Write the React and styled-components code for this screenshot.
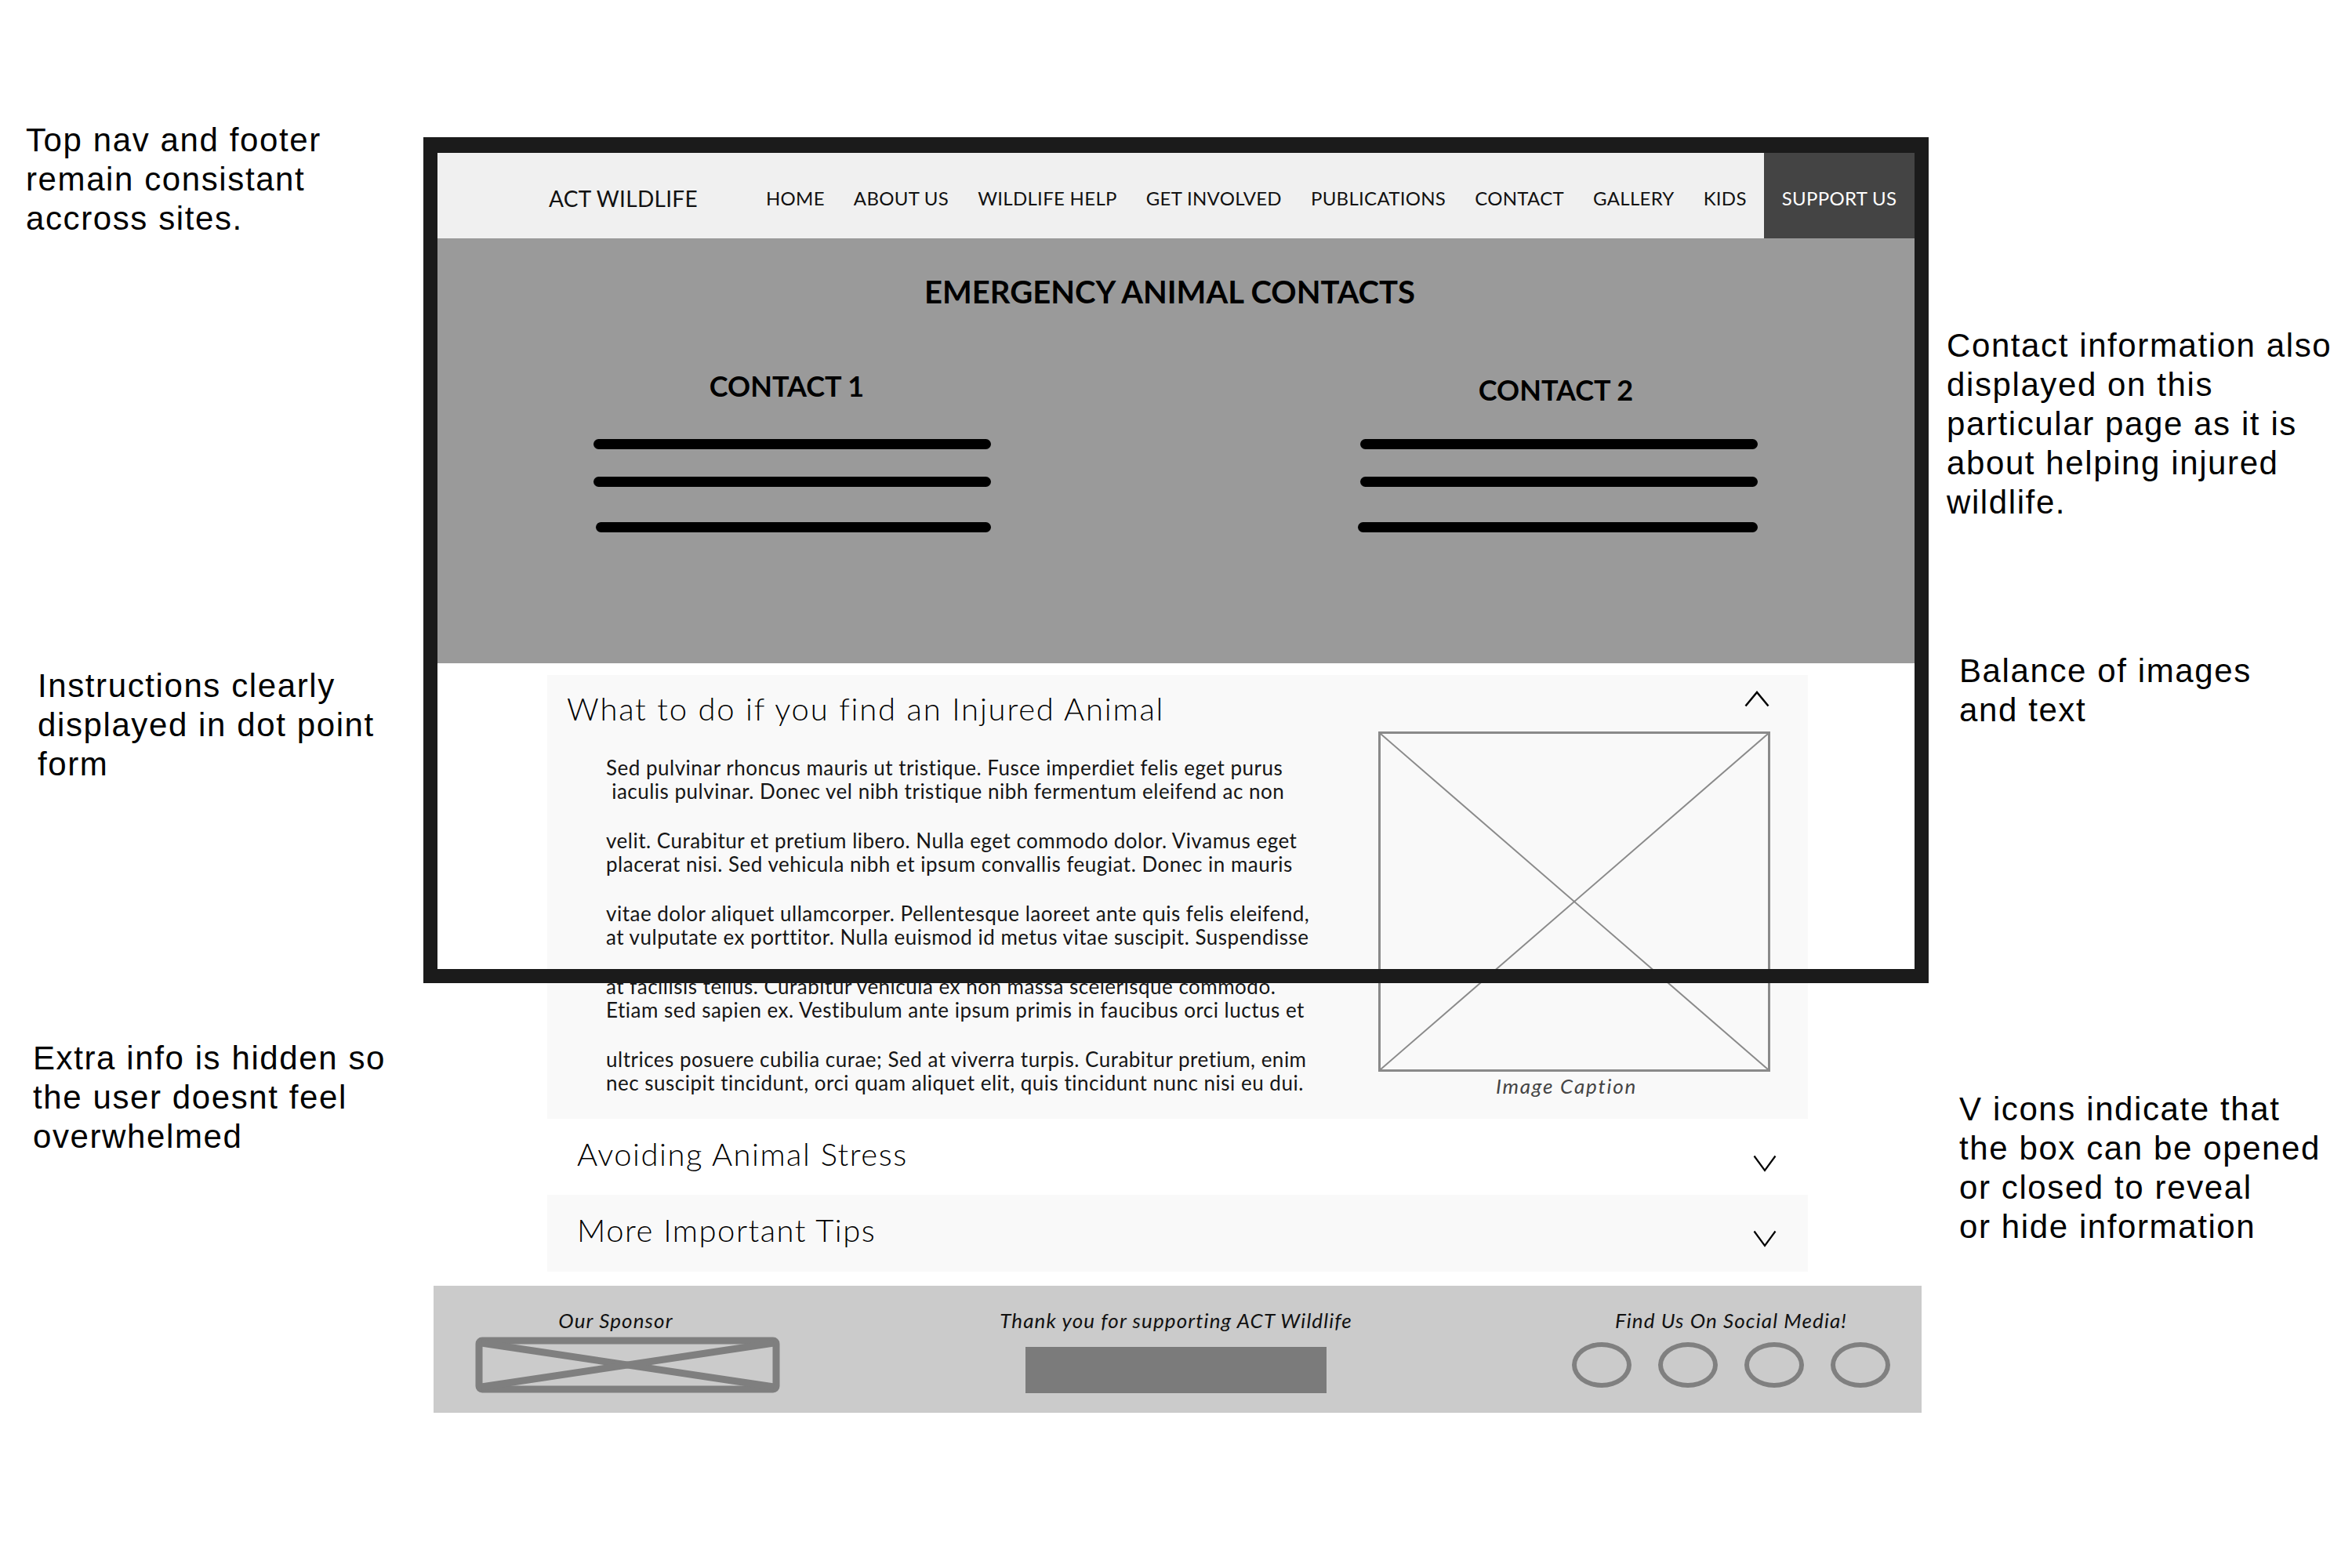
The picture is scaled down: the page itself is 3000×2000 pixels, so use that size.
import React from 'react';
import styled, { createGlobalStyle } from 'styled-components';

const Global = createGlobalStyle`
  html, body { margin: 0; padding: 0; background: #fff; }
  body { width: 3000px; height: 2000px; overflow: hidden; }
  #root { width: 3000px; height: 2000px; }
`;

const Board = styled.div`
  display: grid;
  grid-template-columns: 540px 1920px 540px;
  width: 3000px;
  height: 2000px;
  background: #fff;
`;

const NoteColumn = styled.aside`
  display: flex;
  flex-direction: column;
  align-items: flex-start;
  padding-top: ${(p) => p.$top}px;
`;

const Note = styled.p`
  margin: ${(p) => p.$gap || 0}px 0 0 ${(p) => p.$indent}px;
  font-family: "Liberation Sans", Arial, sans-serif;
  font-size: 42px;
  line-height: 50px;
  letter-spacing: 1.6px;
  color: #000;
  white-space: pre;
`;

const Stage = styled.main`
  position: relative;
  padding-top: 195px;
  font-family: Lato, "Open Sans", sans-serif;
  color: #000;
`;

const Frame = styled.div`
  position: absolute;
  left: 0;
  top: 175px;
  width: 1920px;
  height: 1079px;
  box-sizing: border-box;
  border: solid #1b1b1b;
  border-width: 20px 18px 18px 18px;
  pointer-events: none;
  z-index: 2;
`;

const Nav = styled.nav`
  display: flex;
  align-items: stretch;
  height: 109px;
  margin: 0 18px;
  background: #f0f0f0;
`;

const Brand = styled.div`
  display: flex;
  align-items: center;
  padding: 6px 0 0 142px;
  margin-right: 87px;
  font-size: 28px;
  letter-spacing: 0.3px;
  color: #111;
`;

const Links = styled.ul`
  display: flex;
  align-items: center;
  gap: 37px;
  margin: 0;
  padding: 6px 0 0;
  list-style: none;
  font-size: 24px;
  letter-spacing: 0.3px;
  color: #111;
`;

const Support = styled.a`
  margin-left: auto;
  width: 192px;
  background: #444;
  color: #fff;
  display: flex;
  align-items: center;
  justify-content: center;
  padding-top: 6px;
  font-size: 24px;
  letter-spacing: 0.3px;
  text-decoration: none;
`;

const Hero = styled.section`
  height: 542px;
  margin: 0 18px;
  box-sizing: border-box;
  padding-top: 44px;
  background: #9a9a9a;
`;

const HeroTitle = styled.h1`
  margin: 0;
  padding-right: 16px;
  text-align: center;
  font-size: 40px;
  line-height: 48px;
  font-weight: 700;
`;

const ContactRow = styled.div`
  display: flex;
  justify-content: space-between;
  padding: 0 200px 0 199px;
`;

const ContactCol = styled.div`
  display: flex;
  flex-direction: column;
  width: 507px;
`;

const ContactHeading = styled.h2`
  margin: ${(p) => p.$top}px 0 0;
  padding-right: ${(p) => p.$shift}px;
  text-align: center;
  font-size: 36px;
  line-height: 44px;
  font-weight: 700;
`;

const Rule = styled.div`
  height: 13px;
  border-radius: 7px;
  background: #000;
  margin-top: ${(p) => p.$top}px;
  margin-left: ${(p) => p.$shift || 0}px;
`;

const Accordion = styled.div`
  display: flex;
  flex-direction: column;
  width: 1608px;
  margin: 15px 0 0 158px;
`;

const Panel = styled.div`
  background: #f9f9f9;
`;

const PanelHead = styled.div`
  display: flex;
  justify-content: space-between;
  align-items: flex-start;
  padding: 20px 49px 0 25px;
`;

const PanelTitle = styled.h2`
  margin: 0;
  font-size: 40px;
  line-height: 46px;
  letter-spacing: 1.8px;
  font-weight: 300;
`;

const ChevronBox = styled.svg`
  display: block;
  flex: none;
  margin-top: ${(p) => p.$top || 0}px;
`;

const PanelBody = styled.div`
  display: flex;
  align-items: flex-start;
  margin-top: 6px;
  padding: 0 48px 27px 75px;
`;

const Copy = styled.div`
  padding-top: 31px;
  font-size: 26px;
  line-height: 30px;
  letter-spacing: 0.5px;
  color: #151515;
`;

const Para = styled.p`
  margin: 0 0 33px;
  white-space: pre;
  &:last-child { margin-bottom: 0; }
`;

const Figure = styled.figure`
  margin: 0 0 0 auto;
  width: 500px;
`;

const Caption = styled.figcaption`
  margin-top: 3px;
  padding-right: 20px;
  text-align: center;
  font-style: italic;
  font-size: 26px;
  line-height: 30px;
  letter-spacing: 1.8px;
  color: #444;
`;

const Item = styled.div`
  display: flex;
  align-items: center;
  justify-content: space-between;
  height: ${(p) => p.$h}px;
  box-sizing: border-box;
  padding: 0 40px 0 38px;
  background: ${(p) => (p.$shaded ? '#f9f9f9' : 'transparent')};
`;

const ItemTitle = styled.h3`
  margin: 0 0 8px;
  font-size: 40px;
  line-height: 48px;
  letter-spacing: 1.5px;
  font-weight: 300;
`;

const Footer = styled.footer`
  display: flex;
  justify-content: space-between;
  width: 1898px;
  height: 162px;
  margin: 18px 0 0 13px;
  box-sizing: border-box;
  padding: 29px 40px 0 53px;
  background: #cbcbcb;
`;

const FooterCol = styled.div`
  display: flex;
  flex-direction: column;
  align-items: center;
  width: ${(p) => p.$w}px;
`;

const FooterLabel = styled.span`
  padding-right: ${(p) => p.$shift || 0}px;
  white-space: nowrap;
  font-style: italic;
  font-size: 26px;
  line-height: 30px;
  letter-spacing: 1.1px;
  color: #111;
`;

const SponsorArt = styled.svg`
  display: block;
  margin-top: 6px;
`;

const Donate = styled.div`
  width: 384px;
  height: 59px;
  margin-top: 19px;
  background: #7b7b7b;
`;

const Socials = styled.div`
  display: flex;
  gap: 34px;
  margin-top: 13px;
`;

const Social = styled.span`
  width: 76px;
  height: 58px;
  box-sizing: border-box;
  border: 6px solid #808080;
  border-radius: 50%;
`;

const ChevronUp = () => (
  <ChevronBox width="32" height="21" viewBox="0 0 32 21">
    <polyline points="1.5,19.5 16,2 30.5,19.5" fill="none" stroke="#000" strokeWidth="2.5" />
  </ChevronBox>
);

const ChevronDown = ({ top }) => (
  <ChevronBox $top={top} width="30" height="22" viewBox="0 0 30 22">
    <polyline points="1.5,1.5 15,20 28.5,1.5" fill="none" stroke="#000" strokeWidth="2.2" />
  </ChevronBox>
);

const paragraphs = [
  ['Sed pulvinar rhoncus mauris ut tristique. Fusce imperdiet felis eget purus', ' iaculis pulvinar. Donec vel nibh tristique nibh fermentum eleifend ac non'],
  ['velit. Curabitur et pretium libero. Nulla eget commodo dolor. Vivamus eget', 'placerat nisi. Sed vehicula nibh et ipsum convallis feugiat. Donec in mauris'],
  ['vitae dolor aliquet ullamcorper. Pellentesque laoreet ante quis felis eleifend,', 'at vulputate ex porttitor. Nulla euismod id metus vitae suscipit. Suspendisse'],
  ['at facilisis tellus. Curabitur vehicula ex non massa scelerisque commodo.', 'Etiam sed sapien ex. Vestibulum ante ipsum primis in faucibus orci luctus et'],
  ['ultrices posuere cubilia curae; Sed at viverra turpis. Curabitur pretium, enim', 'nec suscipit tincidunt, orci quam aliquet elit, quis tincidunt nunc nisi eu dui.'],
];

const links = ['HOME', 'ABOUT US', 'WILDLIFE HELP', 'GET INVOLVED', 'PUBLICATIONS', 'CONTACT', 'GALLERY', 'KIDS'];

export default function App() {
  return (
    <>
      <Global />
      <Board>
        <NoteColumn $top={154}>
          <Note $indent={33}>{'Top nav and footer\nremain consistant\naccross sites.'}</Note>
          <Note $indent={48} $gap={546}>{'Instructions clearly\ndisplayed in dot point\nform'}</Note>
          <Note $indent={42} $gap={325}>{'Extra info is hidden so\nthe user doesnt feel\noverwhelmed'}</Note>
        </NoteColumn>

        <Stage>
          <Frame />
          <Nav>
            <Brand>ACT WILDLIFE</Brand>
            <Links>
              {links.map((l) => (
                <li key={l}>{l}</li>
              ))}
            </Links>
            <Support>SUPPORT US</Support>
          </Nav>

          <Hero>
            <HeroTitle>EMERGENCY ANIMAL CONTACTS</HeroTitle>
            <ContactRow>
              <ContactCol>
                <ContactHeading $top={74} $shift={14}>CONTACT 1</ContactHeading>
                <Rule $top={46} />
                <Rule $top={35} />
                <Rule $top={45} $shift={3} />
              </ContactCol>
              <ContactCol>
                <ContactHeading $top={79} $shift={8}>CONTACT 2</ContactHeading>
                <Rule $top={41} />
                <Rule $top={35} />
                <Rule $top={45} $shift={-3} />
              </ContactCol>
            </ContactRow>
          </Hero>

          <Accordion>
            <Panel>
              <PanelHead>
                <PanelTitle>What to do if you find an Injured Animal</PanelTitle>
                <ChevronUp />
              </PanelHead>
              <PanelBody>
                <Copy>
                  {paragraphs.map((p, i) => (
                    <Para key={i}>{p[0] + '\n' + p[1]}</Para>
                  ))}
                </Copy>
                <Figure>
                  <svg width="500" height="434" viewBox="0 0 500 434" style={{ display: 'block' }}>
                    <rect x="1.5" y="1.5" width="497" height="431" fill="none" stroke="#8a8a8a" strokeWidth="3" />
                    <line x1="3" y1="3" x2="497" y2="431" stroke="#8a8a8a" strokeWidth="2" />
                    <line x1="497" y1="3" x2="3" y2="431" stroke="#8a8a8a" strokeWidth="2" />
                  </svg>
                  <Caption>Image Caption</Caption>
                </Figure>
              </PanelBody>
            </Panel>
            <Item $h={97}>
              <ItemTitle>Avoiding Animal Stress</ItemTitle>
              <ChevronDown top={16} />
            </Item>
            <Item $h={98} $shaded>
              <ItemTitle>More Important Tips</ItemTitle>
              <ChevronDown top={14} />
            </Item>
          </Accordion>

          <Footer>
            <FooterCol $w={389}>
              <FooterLabel $shift={30}>Our Sponsor</FooterLabel>
              <SponsorArt width="389" height="72" viewBox="0 0 389 72">
                <rect x="5" y="5" width="379" height="62" rx="4" fill="none" stroke="#7f7f7f" strokeWidth="9" />
                <line x1="8" y1="8" x2="381" y2="64" stroke="#7f7f7f" strokeWidth="9" />
                <line x1="381" y1="8" x2="8" y2="64" stroke="#7f7f7f" strokeWidth="9" />
              </SponsorArt>
            </FooterCol>
            <FooterCol $w={452}>
              <FooterLabel>Thank you for supporting ACT Wildlife</FooterLabel>
              <Donate />
            </FooterCol>
            <FooterCol $w={406}>
              <FooterLabel $shift={-12}>Find Us On Social Media!</FooterLabel>
              <Socials>
                <Social />
                <Social />
                <Social />
                <Social />
              </Socials>
            </FooterCol>
          </Footer>
        </Stage>

        <NoteColumn $top={416}>
          <Note $indent={23}>{'Contact information also\ndisplayed on this\nparticular page as it is\nabout helping injured\nwildlife.'}</Note>
          <Note $indent={39} $gap={165}>{'Balance of images\nand text'}</Note>
          <Note $indent={39} $gap={459}>{'V icons indicate that\nthe box can be opened\nor closed to reveal\nor hide information'}</Note>
        </NoteColumn>
      </Board>
    </>
  );
}
